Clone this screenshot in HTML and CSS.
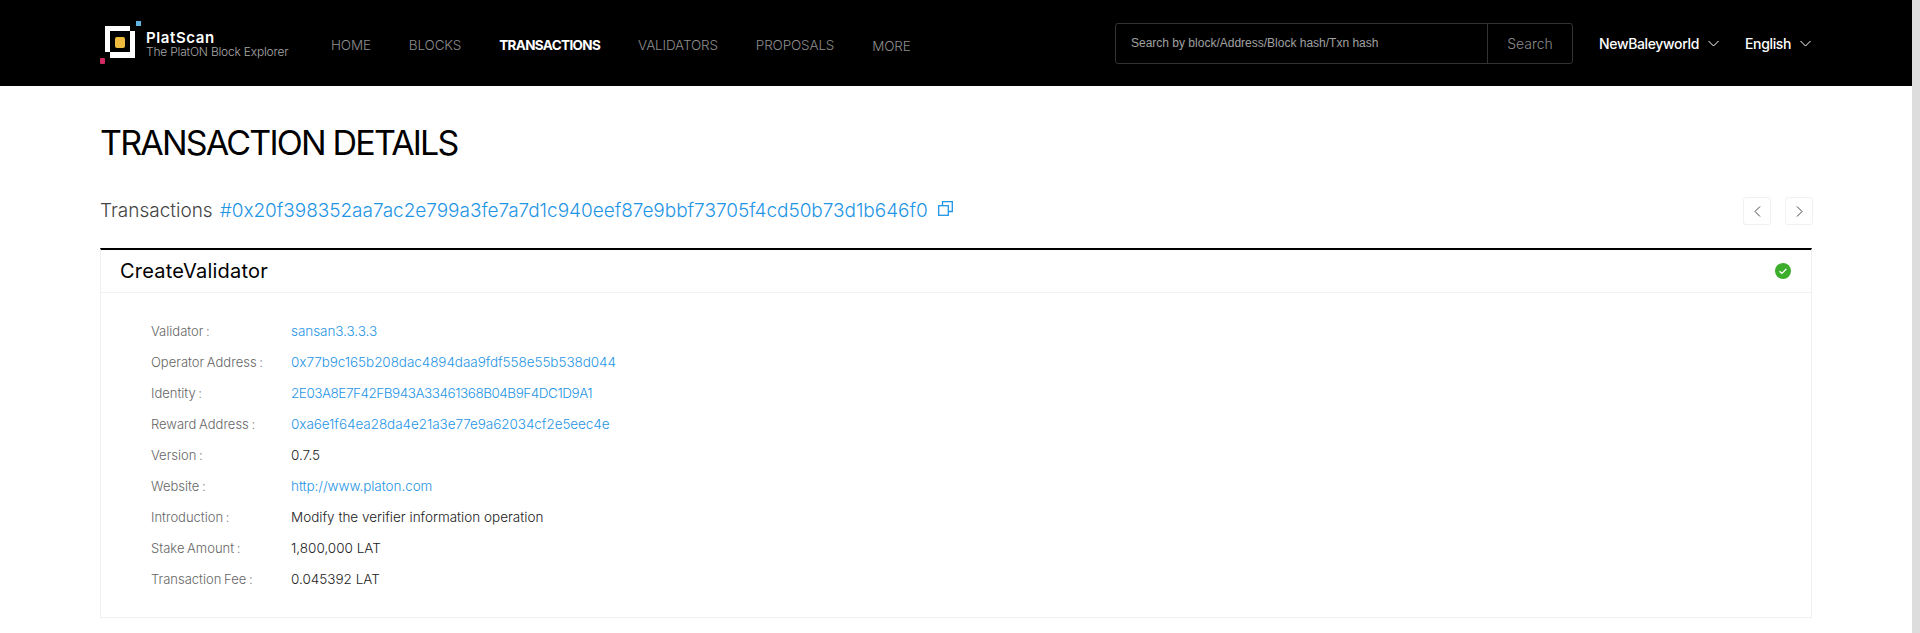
FILE: index.html
```html
<!DOCTYPE html>
<html lang="en">
<head>
    <meta charset="UTF-8">
    <meta name="viewport" content="width=device-width, initial-scale=1.0">
    <title>Transaction Details - PlatScan</title>
    <link rel="stylesheet" href="styles.css">
</head>
<body>
    <div class="page">
        <header class="header">
            <a class="logo">
                <svg class="logo-mark" width="46" height="46" viewBox="0 0 46 46">
                    <rect x="36" y="0" width="5" height="5" fill="#5fb4e0"/>
                    <rect x="0" y="37" width="5" height="6" rx="1" fill="#d12a63"/>
                    <path d="M5 5h25v5H10v21H5z" fill="#fff"/>
                    <path d="M30 10h5v27H10v-6h20z" fill="#fff"/>
                    <rect x="15" y="16" width="10" height="11" rx="2" fill="#eebb3f"/>
                </svg>
                <span class="logo-text">
                    <span class="logo-name">PlatScan</span>
                    <span class="logo-sub">The PlatON Block Explorer</span>
                </span>
            </a>
            <nav class="nav">
                <a>HOME</a>
                <a>BLOCKS</a>
                <a class="active">TRANSACTIONS</a>
                <a>VALIDATORS</a>
                <a>PROPOSALS</a>
                <a class="more">MORE</a>
            </nav>
            <div class="search">
                <span class="search-input">Search by block/Address/Block hash/Txn hash</span>
                <span class="search-btn">Search</span>
            </div>
            <a class="picker picker-net">NewBaleyworld
                <svg class="chevron" width="11" height="7" viewBox="0 0 11 7"><path d="M.5 1l5 5 5-5" fill="none" stroke="#fff"/></svg>
            </a>
            <a class="picker picker-lang">English
                <svg class="chevron" width="11" height="7" viewBox="0 0 11 7"><path d="M.5 1l5 5 5-5" fill="none" stroke="#fff"/></svg>
            </a>
        </header>

        <main class="content">
            <h1>TRANSACTION DETAILS</h1>
            <div class="tx-line">
                <div class="tx-title">
                    Transactions <a class="link tx-hash">#0x20f398352aa7ac2e799a3fe7a7d1c940eef87e9bbf73705f4cd50b73d1b646f0</a>
                    <svg class="copy" width="15" height="15" viewBox="0 0 15 15">
                        <path d="M4.5 4V.7h9.8v9.8H11" fill="none" stroke="#1f95e5" stroke-width="1.3"/>
                        <rect x=".7" y="4.7" width="9.6" height="9.6" fill="none" stroke="#1f95e5" stroke-width="1.3"/>
                    </svg>
                </div>
                <div class="pager">
                    <a class="pager-btn"><svg width="7" height="11" viewBox="0 0 7 11"><path d="M6 .5l-5 5 5 5" fill="none" stroke="#444"/></svg></a>
                    <a class="pager-btn"><svg width="7" height="11" viewBox="0 0 7 11"><path d="M1 .5l5 5-5 5" fill="none" stroke="#444"/></svg></a>
                </div>
            </div>

            <section class="card">
                <div class="card-head">
                    <span>CreateValidator</span>
                    <svg width="16" height="16" viewBox="0 0 16 16">
                        <circle cx="8" cy="8" r="8" fill="#3cae2c"/>
                        <path d="M4.5 8.2l2.4 2.2 4.4-4.4" fill="none" stroke="#fff" stroke-width="1.4"/>
                    </svg>
                </div>
                <div class="card-body">
                    <div class="row"><span class="label">Validator :</span><a class="link">sansan3.3.3.3</a></div>
                    <div class="row"><span class="label">Operator Address :</span><a class="link">0x77b9c165b208dac4894daa9fdf558e55b538d044</a></div>
                    <div class="row"><span class="label">Identity :</span><a class="link caps">2E03A8E7F42FB943A33461368B04B9F4DC1D9A1</a></div>
                    <div class="row"><span class="label">Reward Address :</span><a class="link">0xa6e1f64ea28da4e21a3e77e9a62034cf2e5eec4e</a></div>
                    <div class="row"><span class="label">Version :</span><span>0.7.5</span></div>
                    <div class="row"><span class="label">Website :</span><a class="link">http://www.platon.com</a></div>
                    <div class="row"><span class="label">Introduction :</span><span>Modify the verifier information operation</span></div>
                    <div class="row"><span class="label">Stake Amount :</span><span>1,800,000 LAT</span></div>
                    <div class="row"><span class="label">Transaction Fee :</span><span>0.045392 LAT</span></div>
                </div>
            </section>
        </main>
    </div>
</body>
</html>
```

FILE: styles.css
```css
html {
    height: 100%;
    background: #ddd;
}
body {
    height: 100%;
    margin: 0;
    font-family: 'Inter', 'Lato', sans-serif;
    font-weight: 300;
    color: #000;
    overflow: hidden;
}
.page {
    height: 100%;
    margin-right: 8px;
    background: #fff;
}

/* header */
.header {
    display: flex;
    align-items: center;
    height: 86px;
    padding-left: 100px;
    background: #000;
    color: #fff;
}
.logo {
    display: flex;
    align-items: center;
    width: 231px;
}
.logo-mark {
    margin-top: 1px;
}
.logo-text {
    display: flex;
    flex-direction: column;
    padding-top: 2px;
}
.logo-name {
    font-size: 15px;
    font-weight: 600;
    line-height: 18px;
    letter-spacing: 0.6px;
}
.logo-sub {
    margin-top: -2px;
    font-size: 12px;
    line-height: 14px;
    color: #a9a9a9;
    letter-spacing: -0.2px;
}
.nav {
    display: flex;
    gap: 38px;
    width: 784px;
    margin-top: 5px;
    font-size: 13.5px;
    letter-spacing: -0.15px;
    color: #8d8d8d;
}
.nav .active {
    color: #fff;
    font-weight: 700;
    letter-spacing: -0.65px;
}
.nav .more {
    margin-top: 1px;
}
.search {
    display: flex;
    align-items: center;
    width: 458px;
    height: 41px;
    box-sizing: border-box;
    border: 1px solid #333;
    border-radius: 3px;
}
.search-input {
    flex: 1;
    padding-left: 15px;
    font-family: 'Liberation Sans', sans-serif;
    font-size: 12px;
    font-weight: 400;
    color: #a0a0a0;
}
.search-btn {
    width: 84px;
    line-height: 39px;
    border-left: 1px solid #333;
    text-align: center;
    font-size: 14px;
    color: #8a8a8a;
}
.picker {
    display: flex;
    align-items: center;
    gap: 9px;
    font-size: 14px;
    font-weight: 500;
    letter-spacing: -0.35px;
}
.picker-net {
    margin-left: 26px;
}
.picker-lang {
    margin-left: 26px;
}

/* content */
.content {
    padding: 0 100px;
}
h1 {
    margin: 0;
    padding-top: 36px;
    font-size: 34px;
    line-height: 42px;
    font-weight: 400;
    letter-spacing: -1.8px;
}
.tx-line {
    display: flex;
    justify-content: space-between;
    align-items: center;
    margin-top: 24px;
    height: 42px;
}
.tx-title {
    display: flex;
    align-items: center;
    gap: 7px;
    margin-top: 2px;
    font-size: 19px;
    color: #444;
}
.tx-hash {
    letter-spacing: -0.03px;
}
.link {
    color: #1f95e5;
}
.copy {
    margin: -4px 0 0 3px;
}
.pager {
    display: flex;
    gap: 14px;
    margin: 4px -1px 0 0;
}
.pager-btn {
    display: flex;
    align-items: center;
    justify-content: center;
    width: 28px;
    height: 28px;
    box-sizing: border-box;
    border: 1px solid #f1f1f1;
    border-radius: 3px;
}
.card {
    margin-top: 18px;
    height: 367px;
    border: 1px solid #f0f0f0;
    border-top: 2px solid #000;
}
.card-head {
    display: flex;
    justify-content: space-between;
    align-items: center;
    height: 42px;
    padding: 0 20px 0 19px;
    border-bottom: 1px solid #f3f3f3;
    font-size: 20px;
    font-weight: 400;
    letter-spacing: 0.2px;
}
.card-body {
    padding: 22px 50px 0;
    font-size: 13.5px;
    color: #222;
}
.row {
    display: flex;
    align-items: center;
    height: 31px;
}
.row .link {
    letter-spacing: -0.06px;
}
.label {
    width: 140px;
    font-size: 13px;
    color: #666;
    word-spacing: -1px;
}
.row .caps {
    letter-spacing: -0.47px;
}
```
